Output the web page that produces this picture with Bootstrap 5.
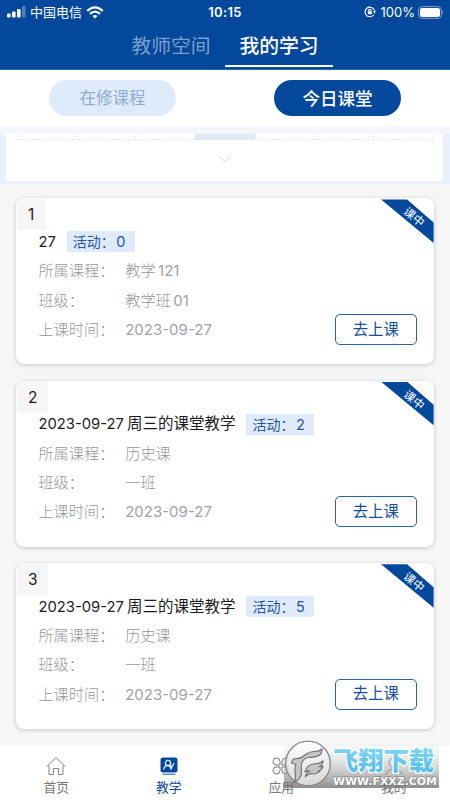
<!DOCTYPE html>
<html lang="zh-CN">
<head>
<meta charset="utf-8">
<meta name="viewport" content="width=device-width, initial-scale=1">
<title>我的学习</title>
<link href="https://cdn.jsdelivr.net/npm/bootstrap@5.3.0/dist/css/bootstrap.min.css" rel="stylesheet">
<style>
:root { --brand: #04489b; --tint: #dfeafa; }
body { font-family: Inter, "Noto Sans CJK SC", sans-serif; background: #f6f6f7; color: #1c1c1e; }
.screen { height: 800px; }
.top-area { background: var(--brand); height: 70px; border-bottom: 1px solid #2d66ab; }
.status { height: 24px; font-size: 13px; line-height: 24px; padding: 0 6px 0 7px; }
.status .clock { font-weight: 600; letter-spacing: .35px; left: 0; right: 0; top: 0; }
.status .lock { margin-right: 5px; }
.status .battery { margin-left: 3px; }
.seg { height: 43px; padding-left: 117px; }
.seg a { width: 108px; height: 43px; line-height: 44px; font-size: 19.8px; text-align: center; color: #7b9fcd; text-decoration: none; }
.seg a.on { color: #fff; font-weight: 500; border-bottom: 2px solid #fff; }
.pills { height: 56px; padding: 10px 49px 0; }
.pill-btn { width: 127px; height: 36px; padding: 0; line-height: 36px; border: 0; font-size: 16.5px; border-radius: 18px; background: var(--tint); color: #8eacd3; }
.pill-btn.on { background: var(--brand); color: #fff; font-weight: 500; font-size: 17.5px; line-height: 35px; }
.strip { height: 8px; background: #f5f6fb; }
.cal { background: #e8f0fd; height: 50px; padding: 0 7px 3px 6px; }
.cal-in { height: 47px; }
.lessons { padding: 14.4px 16.4px 0; height: 562px; }
.lesson { height: 166px; border: 0; border-radius: 8px; box-shadow: 0 1px 4px rgba(0,0,0,.2); margin-bottom: 16.4px; padding: 31.5px 17px 0 22px; }
.num { left: 1px; top: 1px; width: 29px; height: 31px; background: #f6f6f7; font-size: 15.5px; line-height: 32px; padding-left: 10.5px; }
.num.wide { width: 31px; }
.ttl { height: 24px; font-size: 15.5px; line-height: 24px; margin-bottom: 2.5px; }
.ttl .d { font-size: 14.8px; }
.ttl .zh { margin-left: 3px; }
.tag { margin-left: 11px; width: 68px; height: 21px; line-height: 21px; background: var(--tint); color: #2456a0; font-size: 14px; padding-left: 6px; border-radius: 1px; }
.tag b { font-weight: 400; font-size: 14.5px; margin-left: 1.5px; }
.info { height: 29.3px; line-height: 29.3px; font-size: 15.2px; color: #96969a; font-weight: 300; }
.info dt { width: 86.8px; font-weight: 300; }
.info dd { margin: 0; }
.info .d { font-size: 15px; font-weight: 400; color: #a2a2a4; }
.info .gap { margin-left: 2.5px; }
.go { right: 16.8px; bottom: 19.4px; width: 82px; height: 31px; padding: 0; font-size: 15.4px; line-height: 28px; border: 1px solid #2a62aa; border-radius: 5px; color: #174f9e; background: #fff; }
.ribbon { right: 0; top: 1px; width: 52.5px; height: 44px; background: var(--brand); clip-path: polygon(0 0, 26px 0, 52.5px 23px, 52.5px 43.5px); color: #fff; }
.ribbon span { position: absolute; left: 19.5px; top: 10px; width: 26px; line-height: 16px; font-size: 11.5px; text-align: center; transform: rotate(40deg); }
.bottom-bar { height: 54px; font-size: 12.8px; color: #77777a; }
.bottom-bar a { width: 112.5px; color: inherit; text-decoration: none; padding-top: 9.5px; line-height: 19px; }
.bottom-bar a svg { display: block; margin: 0 auto 2.4px; }
.bottom-bar a.on { color: var(--brand); }
.stamp { left: 284px; top: 740px; }
</style>
</head>
<body>
<div class="screen position-relative overflow-hidden d-flex flex-column">
  <header class="top-area text-white flex-shrink-0">
    <div class="status position-relative d-flex align-items-center">
      <svg width="19" height="12" viewBox="0 0 19 12" fill="#fff"><rect y="7.5" width="3.6" height="4" rx="1"/><rect x="5" y="5.5" width="3.6" height="6" rx="1"/><rect x="10" y="3" width="3.6" height="8.5" rx="1"/><rect x="15" width="3.6" height="11.5" rx="1" opacity=".3"/></svg>
      <span class="ms-1">中国电信</span>
      <svg class="ms-1" width="18" height="13" viewBox="0 0 18 13" fill="none" stroke="#fff" stroke-width="2.2"><path d="M1.2 5Q9-2.4 16.8 5M4 7.9q5-4.6 10 0"/><path d="M9 12.5 6.500 10q2.500-2 5 0Z" fill="#fff" stroke="none"/></svg>
      <div class="clock position-absolute text-center">10:15</div>
      <div class="ms-auto d-flex align-items-center">
        <svg class="lock" width="12" height="12" viewBox="0 0 12 12" fill="none" stroke="#fff" stroke-width="1.1"><path d="M9.600 3A4.800 4.800 0 1 0 9.700 8.800M9.700 3q1 1.300.9 3"/><path d="m9 5.400 3 0-1.500 2Z" fill="#fff" stroke="none"/><rect x="3.800" y="5.200" width="4" height="3" fill="#fff" stroke="none"/><path d="M4.500 5.500V4.500a1.300 1.300 0 0 1 2.600 0v1"/></svg>
        <span>100%</span>
        <svg class="battery" width="26" height="13" viewBox="0 0 26 13"><rect x=".6" y=".6" width="22.8" height="11.8" rx="3.5" fill="none" stroke="#7f9fca"/><rect x="2" y="2" width="20" height="9" rx="2" fill="#fff"/><path d="M24.500 4.500q1.600 2 0 4Z" fill="#7f9fca"/></svg>
      </div>
    </div>
    <nav class="seg d-flex"><a href="#">教师空间</a><a href="#" class="on">我的学习</a></nav>
  </header>

  <div class="pills bg-white d-flex justify-content-between align-items-start flex-shrink-0">
    <button class="pill-btn">在修课程</button>
    <button class="pill-btn on">今日课堂</button>
  </div>
  <div class="strip flex-shrink-0"></div>
  <div class="cal flex-shrink-0">
    <div class="cal-in bg-white">
      <svg class="d-block" width="437" height="47" viewBox="0 0 437 47" fill="none">
        <path d="M189 0h60v6h-60Z" fill="var(--tint)"/>
        <path d="M11 5.500H428" stroke="#e6e8ec" stroke-dasharray="3 2"/>
        <path d="M11 1v2M69.500 3.500l1.500-2M129 3.500l1.500-2M189 3.500l1.500-2M249 1.500v2M307.500 3.500l1.500-2M367 3.500l1.500-2M427 1v2" stroke="#d9dce1"/>
        <path d="m213.500 22.500 5.500 5 5.500-5" stroke="#d4d4d7"/>
      </svg>
    </div>
  </div>

  <main class="lessons flex-shrink-0">
    <article class="lesson card overflow-hidden">
      <div class="num position-absolute">1</div>
      <div class="ribbon position-absolute"><span>课中</span></div>
      <div class="ttl d-flex align-items-center"><span class="d">27</span><span class="tag">活动：<b>0</b></span></div>
      <dl class="mb-0">
        <div class="info d-flex"><dt>所属课程：</dt><dd>教学<span class="d gap">121</span></dd></div>
        <div class="info d-flex"><dt>班级：</dt><dd>教学班<span class="d gap">01</span></dd></div>
        <div class="info d-flex"><dt>上课时间：</dt><dd class="d">2023-09-27</dd></div>
      </dl>
      <button class="go position-absolute">去上课</button>
    </article>
    <article class="lesson card overflow-hidden">
      <div class="num wide position-absolute">2</div>
      <div class="ribbon position-absolute"><span>课中</span></div>
      <div class="ttl d-flex align-items-center"><span class="d">2023-09-27</span><span class="zh">周三的课堂教学</span><span class="tag">活动：<b>2</b></span></div>
      <dl class="mb-0">
        <div class="info d-flex"><dt>所属课程：</dt><dd>历史课</dd></div>
        <div class="info d-flex"><dt>班级：</dt><dd>一班</dd></div>
        <div class="info d-flex"><dt>上课时间：</dt><dd class="d">2023-09-27</dd></div>
      </dl>
      <button class="go position-absolute">去上课</button>
    </article>
    <article class="lesson card overflow-hidden">
      <div class="num wide position-absolute">3</div>
      <div class="ribbon position-absolute"><span>课中</span></div>
      <div class="ttl d-flex align-items-center"><span class="d">2023-09-27</span><span class="zh">周三的课堂教学</span><span class="tag">活动：<b>5</b></span></div>
      <dl class="mb-0">
        <div class="info d-flex"><dt>所属课程：</dt><dd>历史课</dd></div>
        <div class="info d-flex"><dt>班级：</dt><dd>一班</dd></div>
        <div class="info d-flex"><dt>上课时间：</dt><dd class="d">2023-09-27</dd></div>
      </dl>
      <button class="go position-absolute">去上课</button>
    </article>
  </main>

  <nav class="bottom-bar bg-white d-flex text-center flex-shrink-0">
    <a href="#"><svg width="20" height="20" viewBox="0 0 20 20" fill="none" stroke="#8a8a8c"><path d="M.8 10.500 10 1.500l9.200 9M3 9v9.500h4.500v-6h5v6H17V9"/></svg>首页</a>
    <a href="#" class="on"><svg width="20" height="20" viewBox="0 0 20 20"><rect x="1.500" y="1.500" width="17" height="15" rx="2.500" fill="#04489b"/><path d="M3.500 18.300h13" stroke="#4c7fbd" stroke-width="1.300"/><g fill="none" stroke="#dfeafa" stroke-width="1.300"><circle cx="9" cy="7" r="2.600"/><path d="M4.800 13.500q.5-4 4.200-4 2 0 3 3.500L15 7M11.500 8.500l1 4"/></g></svg>教学</a>
    <a href="#"><svg width="20" height="20" viewBox="0 0 20 20" fill="none" stroke="#77777a"><path d="M9 9H5a3.500 3.500 0 1 1 4-3.500ZM11 9V5.500A3.500 3.500 0 1 1 15 9ZM9 11v3.500A3.500 3.500 0 1 1 5 11ZM11 11h4a3.500 3.500 0 1 1-4 3.500Z"/></svg>应用</a>
    <a href="#"><svg width="20" height="20" viewBox="0 0 20 20" fill="none" stroke="#77777a"><circle cx="10" cy="6.500" r="5"/><path d="M1.500 19q2-6 8.500-6t8.500 6"/></svg>我的</a>
  </nav>

  <svg class="stamp position-absolute" width="156" height="48" viewBox="0 0 156 48">
    <defs>
      <linearGradient id="haze" x2="0" y2="1"><stop stop-color="#fff" stop-opacity=".25"/><stop offset=".4" stop-color="#bbb" stop-opacity=".35"/><stop offset="1" stop-color="#6e6e6e" stop-opacity=".78"/></linearGradient>
      <linearGradient id="sky" x2="0" y2="1"><stop stop-color="#8cdcf6"/><stop offset="1" stop-color="#4cb9e8"/></linearGradient>
      <linearGradient id="disc" x2="0" y2="1"><stop stop-color="#fff"/><stop offset="1" stop-color="#dcdcdc"/></linearGradient>
    </defs>
    <rect width="155" height="48" fill="url(#haze)"/>
    <circle cx="24" cy="23.500" r="22.300" fill="url(#disc)" fill-opacity=".92" stroke="#888" stroke-width="1.300"/>
    <g fill="#c4c4c4" stroke="#6e6e6e" stroke-width="1.100">
      <path d="M7.500 23q.5-5 6-4.500Q17 18.500 21 15q4-3.500 10-3.500 4 0 7-2.500.5 5-4 7-3.500 1.500-9 1.500-6 .5-7.500 6.500-.5 3 0 8 0 7-7.500 10.500 2-4 1.300-8.500-.8-5 .5-9-1.800-2-4.300-2Z"/>
      <path d="M21 31.500q2-6.500 8-7.500 6 0 10-3-.2 4-4 6l4-.5q-1.500 4-5.500 5l2 0q-3 3.500-8.500 2-3 .5-5.500 3 .5-4 4-5.500-2-.5-4.500.5Z"/>
    </g>
    <text x="49" y="29.500" font-family="Noto Sans CJK SC, sans-serif" font-size="25" font-weight="900" fill="url(#sky)" stroke="#fff" stroke-width="2.400" paint-order="stroke" textLength="101" lengthAdjust="spacingAndGlyphs">飞翔下载</text>
    <text x="49" y="44.500" font-family="DejaVu Sans, sans-serif" font-size="11" font-weight="700" fill="#fff" stroke="#777" stroke-width="1" paint-order="stroke" textLength="104" lengthAdjust="spacingAndGlyphs">WWW.FXXZ.COM</text>
  </svg>
</div>
<script src="https://cdn.jsdelivr.net/npm/bootstrap@5.3.0/dist/js/bootstrap.bundle.min.js"></script>
</body>
</html>
